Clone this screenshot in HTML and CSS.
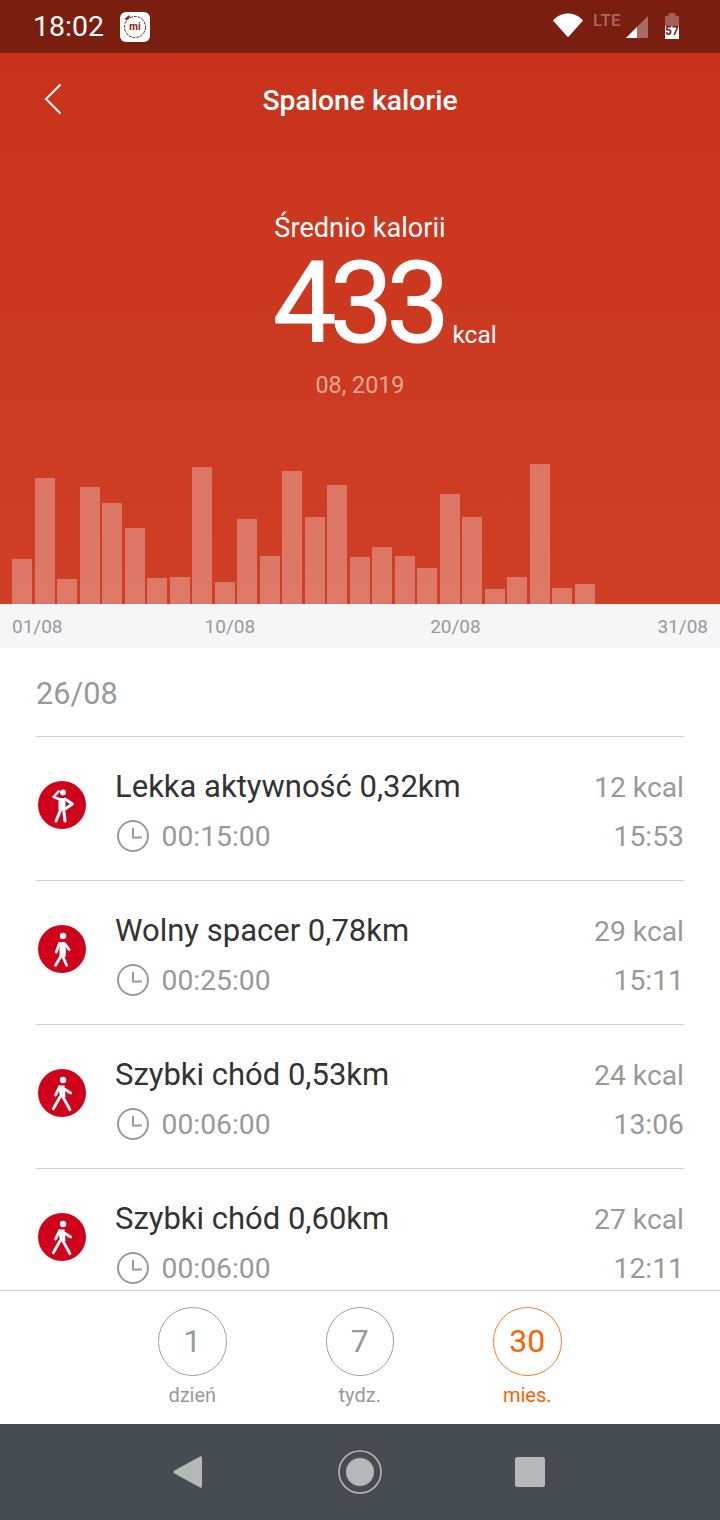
FILE: index.html
```html
<!DOCTYPE html>
<html lang="pl">
<head>
<meta charset="utf-8">
<title>Spalone kalorie</title>
<link rel="stylesheet" href="styles.css">
</head>
<body>
<div class="app">
  <header class="statusbar">
    <div class="status-left">
      <span class="clock">18:02</span>
      <span class="notif">
        <svg viewBox="0 0 30 30" width="30" height="30">
          <circle cx="15" cy="15" r="10.500" fill="none" stroke="#7a1e10" stroke-width="1" stroke-dasharray="3 1"/>
          <path d="M5.500 7.500l4-3.500" stroke="#7a1e10" stroke-width="2"/>
          <text x="15" y="18.200" class="mi-text">mi</text>
        </svg>
      </span>
    </div>
    <div class="status-right">
      <svg class="wifi" viewBox="0 0 30 24" width="30" height="24"><path d="M0 7.500C8 -2 22 -2 30 7.500L16 23.300Q15 24.300 14 23.300Z" fill="#fff"/></svg>
      <span class="lte">LTE</span>
      <svg class="signal" viewBox="0 0 22 22" width="22" height="22"><path d="M22 0V22H0Z" fill="#fff" opacity=".35"/><path d="M11 11V22H0Z" fill="#fff"/></svg>
      <svg class="battery" viewBox="0 0 14 26" width="14" height="26"><path d="M3.500 0h7v3H14v10H0V3h3.500z" fill="#fff" opacity=".3"/><rect y="13" width="14" height="13" fill="#fff"/><text x="7" y="18.500" class="batt-text">57</text></svg>
    </div>
  </header>

  <section class="hero">
    <div class="topbar">
      <svg class="back" viewBox="0 0 18 32" width="18" height="32"><path d="M16.500 1.500L2 16l14.500 14.500" fill="none" stroke="#fff" stroke-width="2"/></svg>
      <h1 class="title">Spalone kalorie</h1>
    </div>
    <div class="summary">
      <div class="avg-label">Średnio kalorii</div>
      <div class="value-row"><span class="value">433</span><span class="unit">kcal</span></div>
      <div class="period">08, 2019</div>
    </div>
    <div class="bars">
      <i style="height:45px"></i><i style="height:126px"></i><i style="height:25px"></i><i style="height:117px"></i><i style="height:101px"></i><i style="height:76px"></i><i style="height:26px"></i><i style="height:27px"></i><i style="height:137px"></i><i style="height:22px"></i><i style="height:85px"></i><i style="height:48px"></i><i style="height:133px"></i><i style="height:87px"></i><i style="height:119px"></i><i style="height:47px"></i><i style="height:57px"></i><i style="height:48px"></i><i style="height:36px"></i><i style="height:110px"></i><i style="height:87px"></i><i style="height:15px"></i><i style="height:27px"></i><i style="height:140px"></i><i style="height:16px"></i><i style="height:20px"></i>
    </div>
  </section>

  <div class="axis"><span>01/08</span><span class="tick-10">10/08</span><span class="tick-20">20/08</span><span class="tick-31">31/08</span></div>

  <main class="list">
    <div class="day">26/08</div>

    <article class="row">
      <span class="badge">
        <svg viewBox="0 0 48 48" width="48" height="48"><circle cx="24" cy="24" r="24" fill="#d0021b"/><circle cx="25" cy="11.500" r="3" fill="#fff"/><path d="M20.500 17h7v12h-7z" fill="#fff"/><path d="M21 18l-5.500-2 5-5.500" fill="none" stroke="#fff" stroke-width="2.600" stroke-linecap="round" stroke-linejoin="round"/><path d="M27 18l7.500 5-7.500 5M22.500 29l-4.500 11M25.700 29l1.300 11" fill="none" stroke="#fff" stroke-width="3" stroke-linecap="round" stroke-linejoin="round"/></svg>
      </span>
      <div class="row-main">
        <div class="row-title">Lekka aktywność 0,32km</div>
        <div class="row-dur"><svg class="clock-ic" viewBox="0 0 32 32" width="32" height="32"><circle cx="16" cy="16" r="15" fill="none" stroke="#9b9b9b" stroke-width="2"/><path d="M16 8v9.500h9" fill="none" stroke="#9b9b9b" stroke-width="2"/></svg><span>00:15:00</span></div>
      </div>
      <div class="row-side"><span>12 kcal</span><span>15:53</span></div>
    </article>

    <article class="row">
      <span class="badge">
        <svg viewBox="0 0 48 48" width="48" height="48"><circle cx="24" cy="24" r="24" fill="#d0021b"/><circle cx="25" cy="11" r="3.200" fill="#fff"/><path d="M21.500 17h5.500l1 9-.5 6h-6z" fill="#fff"/><path d="M21.500 18.500l-3.300 8.500M27 19l4 5.500M22.500 32l-5 8.300M25 32l3.700 8.300" fill="none" stroke="#fff" stroke-width="2.800" stroke-linecap="round" stroke-linejoin="round"/></svg>
      </span>
      <div class="row-main">
        <div class="row-title">Wolny spacer 0,78km</div>
        <div class="row-dur"><svg class="clock-ic" viewBox="0 0 32 32" width="32" height="32"><circle cx="16" cy="16" r="15" fill="none" stroke="#9b9b9b" stroke-width="2"/><path d="M16 8v9.500h9" fill="none" stroke="#9b9b9b" stroke-width="2"/></svg><span>00:25:00</span></div>
      </div>
      <div class="row-side"><span>29 kcal</span><span>15:11</span></div>
    </article>

    <article class="row">
      <span class="badge">
        <svg viewBox="0 0 48 48" width="48" height="48"><circle cx="24" cy="24" r="24" fill="#d0021b"/><circle cx="25" cy="11" r="3.200" fill="#fff"/><path d="M20.500 16.500h6l1 11.500-5.500 1z" fill="#fff"/><path d="M21.500 18l-4 8M27 20.500l5.700 3.500M22 28l-6.700 11.700M25 28l7 12.700" fill="none" stroke="#fff" stroke-width="2.800" stroke-linecap="round" stroke-linejoin="round"/></svg>
      </span>
      <div class="row-main">
        <div class="row-title">Szybki chód 0,53km</div>
        <div class="row-dur"><svg class="clock-ic" viewBox="0 0 32 32" width="32" height="32"><circle cx="16" cy="16" r="15" fill="none" stroke="#9b9b9b" stroke-width="2"/><path d="M16 8v9.500h9" fill="none" stroke="#9b9b9b" stroke-width="2"/></svg><span>00:06:00</span></div>
      </div>
      <div class="row-side"><span>24 kcal</span><span>13:06</span></div>
    </article>

    <article class="row">
      <span class="badge">
        <svg viewBox="0 0 48 48" width="48" height="48"><circle cx="24" cy="24" r="24" fill="#d0021b"/><circle cx="25" cy="11" r="3.200" fill="#fff"/><path d="M20.500 16.500h6l1 11.500-5.500 1z" fill="#fff"/><path d="M21.500 18l-4 8M27 20.500l5.700 3.500M22 28l-6.700 11.700M25 28l7 12.700" fill="none" stroke="#fff" stroke-width="2.800" stroke-linecap="round" stroke-linejoin="round"/></svg>
      </span>
      <div class="row-main">
        <div class="row-title">Szybki chód 0,60km</div>
        <div class="row-dur"><svg class="clock-ic" viewBox="0 0 32 32" width="32" height="32"><circle cx="16" cy="16" r="15" fill="none" stroke="#9b9b9b" stroke-width="2"/><path d="M16 8v9.500h9" fill="none" stroke="#9b9b9b" stroke-width="2"/></svg><span>00:06:00</span></div>
      </div>
      <div class="row-side"><span>27 kcal</span><span>12:11</span></div>
    </article>
  </main>

  <nav class="ranges">
    <div class="range"><span class="ring">1</span><span class="range-label">dzień</span></div>
    <div class="range"><span class="ring">7</span><span class="range-label">tydz.</span></div>
    <div class="range active"><span class="ring">30</span><span class="range-label">mies.</span></div>
  </nav>

  <footer class="navbar">
    <svg viewBox="0 0 30 34" width="30" height="34"><path d="M1.500 15.500L27 1.500q2-1 2 1.500v28q0 2.500-2 1.500L1.500 18.500q-2-1.500 0-3z" fill="#b4b8b8"/></svg>
    <svg viewBox="0 0 44 44" width="44" height="44"><circle cx="22" cy="22" r="21" fill="none" stroke="#b4b8b8" stroke-width="1.600"/><circle cx="22" cy="22" r="14" fill="#b4b8b8"/></svg>
    <svg viewBox="0 0 30 30" width="30" height="30"><rect width="30" height="30" rx="2.500" fill="#b4b8b8"/></svg>
  </footer>
</div>
</body>
</html>
```
FILE: styles.css
```css
* { box-sizing: border-box; }
html, body { margin: 0; padding: 0; }
body { font-family: Roboto, "Noto Sans", sans-serif; background: #fff; }
.app { width: 720px; height: 1520px; display: flex; flex-direction: column; overflow: hidden; }

.statusbar { height: 53px; flex: none; background: #7a1e10; color: #fff; display: flex; justify-content: space-between; align-items: center; padding: 0 41px 0 33px; }
.status-left { display: flex; align-items: center; gap: 17px; }
.clock { font-size: 28.500px; font-weight: 400; width: 70px; }
.notif { width: 30px; height: 30px; background: #fff; border-radius: 6px; display: block; }
.notif svg { display: block; }
.mi-text { font: 700 10px Roboto, sans-serif; fill: #7a1e10; text-anchor: middle; }
.status-right { display: flex; align-items: flex-start; height: 53px; padding-top: 13px; }
.wifi { margin-right: 10px; }
.lte { font-size: 17px; font-weight: 500; color: rgba(255,255,255,.35); width: 33px; line-height: 15px; letter-spacing: .3px; }
.signal { margin: 3px 17px 0 0; }
.batt-text { font: 700 12px Roboto, sans-serif; fill: #7a1e10; text-anchor: middle; dominant-baseline: middle; }

.hero { height: 551px; flex: none; background: linear-gradient(180deg, #c9331c 0%, #cf3f25 100%); display: flex; flex-direction: column; }
.topbar { height: 94px; flex: none; display: flex; align-items: center; justify-content: center; position: relative; }
.back { position: absolute; left: 44px; top: 30px; }
.title { margin: 0; font-size: 28.300px; font-weight: 500; color: #fff; }
.summary { height: 257px; flex: none; padding-top: 66px; display: flex; flex-direction: column; align-items: center; color: #fff; }
.avg-label { font-size: 27.100px; line-height: 30px; }
.value-row { display: flex; align-items: baseline; align-self: flex-start; margin: 19px 0 0 273px; height: 84px; }
.value { font-size: 113px; line-height: 84px; letter-spacing: -6.700px; font-weight: 400; -webkit-text-stroke: 1px #fff; }
.unit { font-size: 24.500px; line-height: 30px; margin-left: 9px; position: relative; top: 1px; }
.period { font-size: 23.300px; line-height: 26px; color: rgba(255,255,255,.55); margin-top: 26px; }
.bars { flex: 1; display: flex; align-items: flex-end; gap: 2.500px; padding-left: 12px; }
.bars i { display: block; width: 20px; background: rgba(255,255,255,.3); }

.axis { height: 44px; flex: none; background: #f5f6f8; display: flex; align-items: center; padding: 0 12px; font-size: 19px; color: #999; }
.tick-10 { margin-left: 142px; }
.tick-20 { margin-left: 175px; }
.tick-31 { margin-left: auto; }

.list { flex: 1; min-height: 0; overflow: hidden; padding: 0 36px; background: #fff; }
.day { height: 89px; border-bottom: 1px solid #ccc; font-size: 30.700px; color: #999; line-height: 92px; }
.row { height: 144px; border-bottom: 1px solid #ccc; display: flex; align-items: flex-start; padding-top: 26px; }
.badge { width: 48px; height: 48px; margin: 18px 29px 0 2px; flex: none; }
.badge svg { display: block; }
.row-main { flex: 1; }
.row-title { font-size: 31px; line-height: 48px; color: #333; }
.row-dur { display: flex; align-items: center; gap: 12.500px; height: 50px; font-size: 28.300px; color: #999; margin-left: 2px; }
.clock-ic { flex: none; }
.row-side { display: flex; flex-direction: column; align-items: flex-end; font-size: 28.300px; color: #999; padding-top: 1px; }
.row-side span { height: 49px; line-height: 48px; }

.ranges { height: 134px; flex: none; background: #fff; border-top: 1px solid #ccc; display: flex; padding: 16px 0 0 158px; gap: 99px; }
.range { width: 68.500px; display: flex; flex-direction: column; align-items: center; color: #999; }
.ring { width: 68.500px; height: 68.500px; border: 1px solid #a0a0a0; border-radius: 50%; display: flex; align-items: center; justify-content: center; font-size: 32px; }
.range-label { font-size: 20px; line-height: 24px; margin-top: 7.500px; }
.active { color: #ff6000; }
.active .ring { border-color: #ff7a2a; }

.navbar { height: 96px; flex: none; background: #454c52; display: flex; align-items: center; padding-left: 173px; }
.navbar svg:nth-child(1) { margin-right: 135px; }
.navbar svg:nth-child(2) { margin-right: 133px; }
```
